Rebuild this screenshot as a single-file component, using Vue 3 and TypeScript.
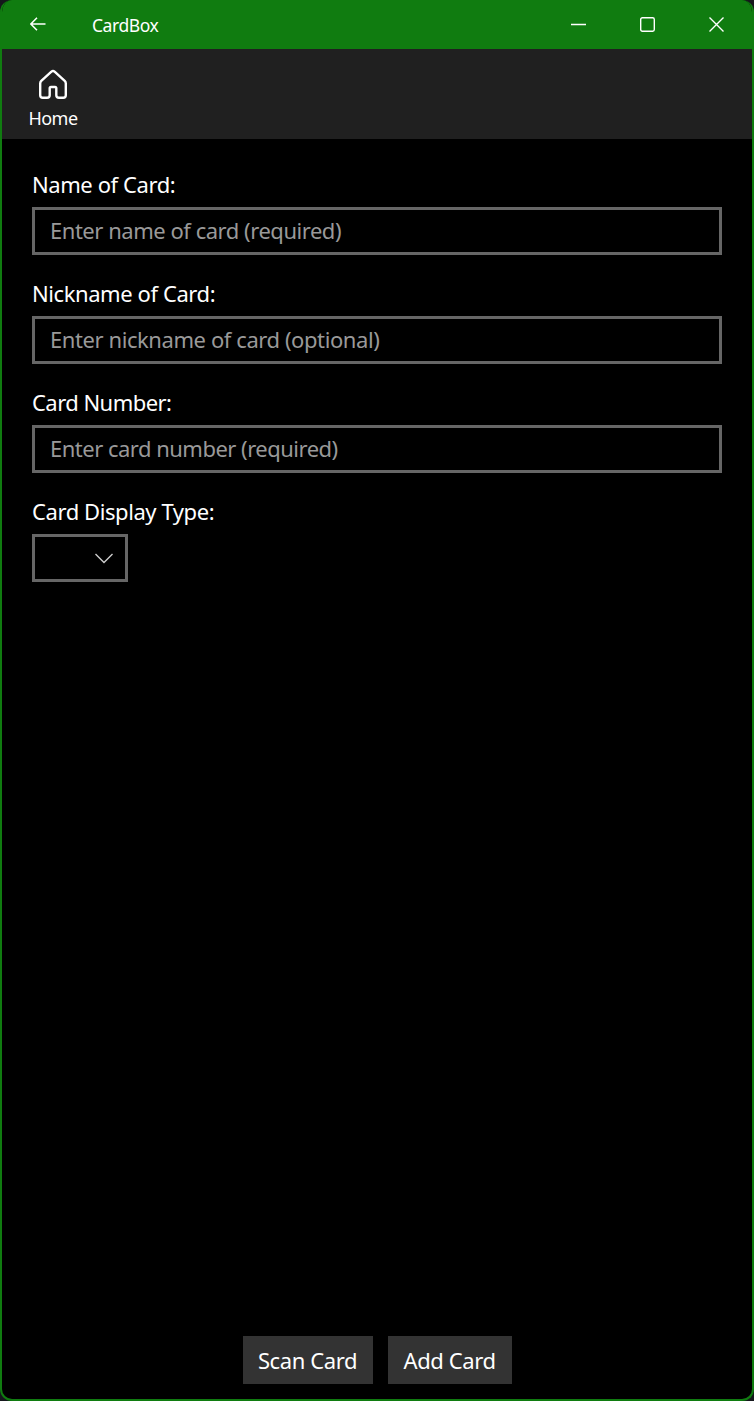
<script setup lang="ts">
interface Field {
  id: string
  label: string
  placeholder: string
}

const fields: Field[] = [
  { id: 'name', label: 'Name of Card:', placeholder: 'Enter name of card (required)' },
  { id: 'nickname', label: 'Nickname of Card:', placeholder: 'Enter nickname of card (optional)' },
  { id: 'number', label: 'Card Number:', placeholder: 'Enter card number (required)' },
]
</script>

<template>
  <div class="window">
    <header class="titlebar">
      <button class="back" aria-label="Back">
        <svg width="16" height="14" viewBox="0 0 16 14"><path d="M7 .8.9 7 7 13.2M1 7h14.500" /></svg>
      </button>
      <span class="title">CardBox</span>
      <div class="controls">
        <button aria-label="Minimize">
          <svg width="15" height="15" viewBox="0 0 15 15"><path d="M0 7.5h15" /></svg>
        </button>
        <button aria-label="Maximize">
          <svg width="15" height="15" viewBox="0 0 15 15"><rect x=".7" y=".7" width="13.6" height="13.6" rx="1.7" /></svg>
        </button>
        <button aria-label="Close">
          <svg width="15" height="15" viewBox="0 0 15 15"><path d="m.5.5 14 14M14.5.5l-14 14" /></svg>
        </button>
      </div>
    </header>
    <nav class="toolbar">
      <button class="home">
        <svg width="30" height="31" viewBox="0 0 30 31">
          <path d="M13.4 2.6Q15 1.300 16.6 2.6L26.7 11.800Q27.800 12.9 27.800 14.4V26.3Q27.800 28.800 25.200 28.800H21Q18.300 28.800 18.300 26.300V19.300Q18.300 18 17 18H13Q11.700 18 11.700 19.300V26.300Q11.700 28.800 9 28.800H4.800Q2.200 28.800 2.200 26.300V14.400Q2.200 12.900 3.300 11.800Z" />
        </svg>
        <span>Home</span>
      </button>
    </nav>
    <main class="form">
      <div v-for="field in fields" :key="field.id" class="field">
        <label :for="field.id" :class="'label-' + field.id">{{ field.label }}</label>
        <input :id="field.id" type="text" :class="'input-' + field.id" :placeholder="field.placeholder" />
      </div>
      <div class="field">
        <label for="display-type">Card Display Type:</label>
        <button id="display-type" class="combo">
          <svg width="18" height="11" viewBox="0 0 18 11"><path d="m.5 1 8.5 8.5L17.5 1" /></svg>
        </button>
      </div>
    </main>
    <footer class="actions">
      <button class="scan">Scan Card</button>
      <button class="add">Add Card</button>
    </footer>
  </div>
</template>

<style>
body {
  margin: 0;
  background: #15171c;
}
</style>

<style scoped>
.window {
  box-sizing: border-box;
  width: 754px;
  height: 1401px;
  display: flex;
  flex-direction: column;
  border: 2px solid #107c10;
  border-top: 0;
  border-radius: 12px;
  overflow: hidden;
  background: #000;
  color: #fff;
  font-family: "Noto Sans", "Open Sans", sans-serif;
}
button,
input {
  box-sizing: border-box;
  margin: 0;
  padding: 0;
  border: 0;
  border-radius: 0;
  background: none;
  color: inherit;
  font: inherit;
}
svg {
  display: block;
  fill: none;
  stroke: currentColor;
}
.titlebar {
  flex: none;
  height: 49px;
  display: flex;
  align-items: center;
  background: #107c10;
}
.back {
  width: 71px;
  height: 49px;
  padding: 0 0 1px 28px;
  stroke-width: 1.5;
}
.title {
  margin-left: 19px;
  font-size: 17.5px;
  line-height: 24px;
  letter-spacing: -0.45px;
}
.controls {
  margin-left: auto;
  display: flex;
}
.controls button {
  width: 69px;
  height: 49px;
  padding: 0 2px 1px 0;
  display: grid;
  place-items: center;
  stroke-width: 1.4;
}
.toolbar {
  flex: none;
  height: 90px;
  background: #202020;
}
.home {
  width: 102px;
  height: 90px;
  display: flex;
  flex-direction: column;
  align-items: center;
  padding-top: 20px;
  font-size: 18px;
  line-height: 24px;
  letter-spacing: -0.5px;
}
.home svg {
  stroke-width: 2.4;
}
.home span {
  margin-top: 6px;
}
.form {
  flex: 1;
  display: flex;
  flex-direction: column;
  gap: 24px;
  padding: 30px 30px 0;
}
.field {
  height: 85px;
  display: flex;
  flex-direction: column;
  align-items: flex-start;
  gap: 8px;
  font-size: 22px;
}
label {
  line-height: 30px;
  letter-spacing: -0.42px;
}
input {
  width: 100%;
  height: 48px;
  flex: none;
  padding: 0 15px 2px;
  border: 3px solid #666;
  letter-spacing: -0.42px;
}
.label-number {
  letter-spacing: -0.54px;
}
.input-name {
  letter-spacing: -0.47px;
}
.input-number {
  letter-spacing: -0.51px;
}
input::placeholder {
  color: #999;
  opacity: 1;
}
.combo {
  width: 96px;
  height: 48px;
  flex: none;
  display: flex;
  align-items: center;
  justify-content: flex-end;
  padding-right: 12px;
  border: 3px solid #666;
  color: #ccc;
  stroke-width: 1.4;
}
.actions {
  display: flex;
  justify-content: center;
  gap: 15px;
  padding: 0 0 15px 1px;
}
.actions button {
  height: 48px;
  padding-right: 1px;
  background: #333;
  font-size: 22px;
  letter-spacing: -0.4px;
  white-space: nowrap;
}
.scan {
  width: 130px;
}
.add {
  width: 124px;
}
</style>
